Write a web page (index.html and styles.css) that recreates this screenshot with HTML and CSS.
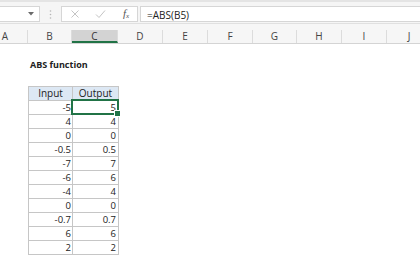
FILE: index.html
```html
<!DOCTYPE html>
<html>
<head>
<meta charset="utf-8">
<link rel="stylesheet" href="styles.css">
</head>
<body>
<div class="app">
  <div class="fbar">
    <div class="namebox">
      <svg class="dd" width="6" height="4" viewBox="0 0 6 4"><path d="M0 0H6L3 3.5Z" fill="#6a6a6a"/></svg>
    </div>
    <div class="grip">
      <svg width="3" height="9" viewBox="0 0 3 9"><circle cx="1.5" cy="1" r="0.8" fill="#b5b5b5"/><circle cx="1.5" cy="4.5" r="0.8" fill="#b5b5b5"/><circle cx="1.5" cy="8" r="0.8" fill="#b5b5b5"/></svg>
    </div>
    <div class="fxbox">
      <svg class="ico" width="10" height="10" viewBox="0 0 10 10"><path d="M1.5 1.5L8.5 8.5M8.5 1.5L1.5 8.5" stroke="#c4c4c4" stroke-width="1" fill="none"/></svg>
      <svg class="ico" width="11" height="10" viewBox="0 0 11 10"><path d="M1 5.5L4 8.5L10 1.5" stroke="#c4c4c4" stroke-width="1" fill="none"/></svg>
      <span class="fx">f<sub>x</sub></span>
    </div>
    <div class="finput">=ABS(B5)</div>
  </div>
  <div class="colheads">
    <div class="ch ch-a">A</div>
    <div class="ch ch-b">B</div>
    <div class="ch ch-c sel">C</div>
    <div class="ch">D</div>
    <div class="ch">E</div>
    <div class="ch">F</div>
    <div class="ch ch-n">G</div>
    <div class="ch">H</div>
    <div class="ch">I</div>
    <div class="ch">J</div>
  </div>
  <div class="sheet">
    <div class="title">ABS function</div>
    <div class="tbl">
      <div class="cell hd">Input</div><div class="cell hd wide">Output</div>
      <div class="cell">-5</div><div class="cell wide active">5</div>
      <div class="cell">4</div><div class="cell wide">4</div>
      <div class="cell">0</div><div class="cell wide">0</div>
      <div class="cell">-0.5</div><div class="cell wide">0.5</div>
      <div class="cell">-7</div><div class="cell wide">7</div>
      <div class="cell">-6</div><div class="cell wide">6</div>
      <div class="cell">-4</div><div class="cell wide">4</div>
      <div class="cell">0</div><div class="cell wide">0</div>
      <div class="cell">-0.7</div><div class="cell wide">0.7</div>
      <div class="cell">6</div><div class="cell wide">6</div>
      <div class="cell">2</div><div class="cell wide">2</div>
    </div>
  </div>
</div>
</body>
</html>
```
FILE: styles.css
```css
* { box-sizing: border-box; }
html, body { margin: 0; padding: 0; }
body {
  width: 420px;
  height: 280px;
  overflow: hidden;
  background: #ffffff;
  font-family: "Open Sans", "Noto Sans", sans-serif;
  color: #222;
}
.app { width: 420px; height: 280px; display: flex; flex-direction: column; }

.fbar {
  height: 24px;
  display: flex;
  align-items: stretch;
  padding: 4px 0 1px 0;
  background: #f5f5f5;
  border-top: 2px solid #e4e4e4;
  border-bottom: 1px solid #e0e0e0;
}
.namebox {
  width: 40px;
  background: #fff;
  border: 1px solid #d6d6d6;
  border-left: none;
  display: flex;
  align-items: center;
  justify-content: flex-end;
  padding-right: 5px;
}
.dd { display: block; }
.grip {
  width: 21px;
  display: flex;
  align-items: center;
  justify-content: center;
}
.grip svg { display: block; }
.fxbox {
  width: 77px;
  background: #fff;
  border: 1px solid #d6d6d6;
  display: flex;
  align-items: center;
  padding-left: 8px;
  gap: 15px;
}
.ico { display: block; }
.fx {
  font-family: "Liberation Serif", serif;
  font-style: italic;
  font-size: 11px;
  color: #555;
  margin-left: 2px;
  line-height: 1;
}
.fx sub { font-size: 7px; vertical-align: -1px; }
.finput {
  flex: 1;
  margin-left: 2px;
  background: #fff;
  border: 1px solid #d6d6d6;
  border-right: none;
  padding-left: 6px;
  font-size: 10px;
  line-height: 17px;
  color: #222;
}

.colheads {
  height: 20px;
  display: flex;
  background: #f6f6f6;
  padding-top: 6px;
  border-bottom: 1px solid #d4d4d4;
}
.ch {
  width: 45px;
  flex: none;
  border-right: 1px solid #dcdcdc;
  text-align: center;
  font-size: 10px;
  line-height: 13px;
  color: #444;
}
.ch-a { width: 28px; padding-right: 17px; }
.ch-b { width: 44px; }
.ch-c { width: 46px; }
.ch-n { width: 44px; }
.sel {
  background: #d3d3d3;
  border-bottom: 2px solid #217346;
  line-height: 12px;
  color: #333;
}

.sheet {
  flex: 1;
  padding-left: 28px;
}
.title {
  margin-top: 14px;
  height: 14px;
  line-height: 14px;
  padding-left: 2px;
  font-size: 9px;
  font-weight: 700;
  color: #222;
}
.tbl {
  margin-top: 14px;
  display: grid;
  grid-template-columns: 44px 46px;
  grid-auto-rows: 14px;
  width: 91px;
  border-left: 1px solid #c6c6c6;
  border-top: 1px solid #c6c6c6;
}
.cell {
  border-right: 1px solid #c6c6c6;
  border-bottom: 1px solid #c6c6c6;
  font-size: 9.5px;
  line-height: 13px;
  text-align: right;
  padding-right: 1px;
  color: #222;
  position: relative;
}
.wide { padding-right: 2px; }
.hd {
  background: #dde8f4;
  text-align: center;
  padding-right: 0;
  font-size: 10px;
}
.active::after {
  content: "";
  position: absolute;
  left: -2px;
  top: -2px;
  right: -1px;
  bottom: -1px;
  border: 2px solid #217346;
}
.active::before {
  content: "";
  position: absolute;
  right: -3px;
  bottom: -3px;
  width: 5px;
  height: 5px;
  background: #217346;
  border: 1px solid #fff;
  z-index: 2;
}
```
